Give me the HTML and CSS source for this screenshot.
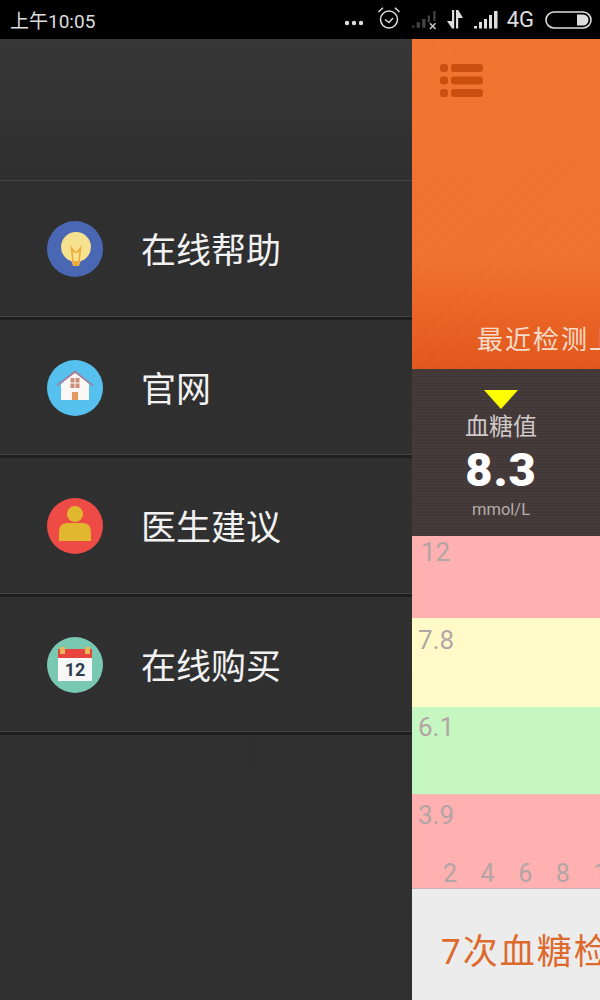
FILE: index.html
```html
<!DOCTYPE html>
<html lang="en">
<head>
  <meta charset="UTF-8">
  <meta name="viewport" content="width=device-width, initial-scale=1.0">
  <title>血糖</title>
  <link rel="stylesheet" href="styles.css">
</head>
<body>

  <div class="status-bar">
    <span class="status-time">上午10:05</span>
    <div class="status-icons">
      <svg class="ic-dots" width="20" height="6" viewBox="0 0 20 6"><circle cx="3" cy="3" r="2.2"/><circle cx="10" cy="3" r="2.2"/><circle cx="17" cy="3" r="2.2"/></svg>
      <svg class="ic-alarm" width="24" height="24" viewBox="0 0 24 24" fill="none" stroke="#ddd" stroke-width="1.5"><circle cx="12" cy="13.5" r="8.5"/><path d="M8 13.5l4 3 4-4.5"/><path d="M1.5 6L6 1.8M22.5 6L18 1.8"/></svg>
      <svg class="ic-sim" width="27" height="20" viewBox="0 0 24 18"><path fill="#444" d="M0 14h2v2H0zM4 11h3v5H4zM9 8h3v8H9zM14 5h2v6h-2zM19 1h2v9h-2z"/><path stroke="#ccc" stroke-width="1.3" fill="none" d="M16 12l5 5M21 12l-5 5"/></svg>
      <svg class="ic-data" width="16" height="19" viewBox="0 0 16 19" fill="#ddd"><path d="M5 0h2.2v18.5H5L0 11h5zM9 0h2.2L16 8h-4.800v10.500H9z"/></svg>
      <svg class="ic-signal" width="24" height="18" viewBox="0 0 24 18" fill="#ddd"><path d="M0 15h3v2.500H0zM5 11h3v6.500H5zM10 8h3v9.500h-3zM15 4h3v13.500h-3zM20 0h3.500v17.500H20z"/></svg>
      <span class="status-net">4G</span>
      <svg class="ic-battery" width="47" height="18" viewBox="0 0 47 18"><rect x="1" y="1" width="45" height="16" rx="8" fill="none" stroke="#ddd" stroke-width="1.6"/><path fill="#ddd" d="M32 3.500h6a5.500 5.500 0 0 1 0 11h-6z"/></svg>
    </div>
  </div>

  <div class="screen">
    <nav class="drawer">
      <div class="drawer-top"></div>

      <a class="menu-row">
        <svg class="menu-icon" viewBox="0 0 56 56">
          <circle cx="28" cy="28" r="28" fill="#4a67b4"/>
          <circle cx="29" cy="26" r="15" fill="#f6e28e"/>
          <path d="M23 32l6 11 6-11v5l-3 7h-6l-3-7z" fill="#f6e28e"/>
          <path d="M25 40h8l-1 5h-6z" fill="#eeaa3a"/>
          <path d="M26 41l-1.500-14 3 4h3l3-4L32 41" fill="none" stroke="#eeaa3a" stroke-width="1.600"/>
        </svg>
        <span>在线帮助</span>
      </a>

      <a class="menu-row">
        <svg class="menu-icon" viewBox="0 0 56 56">
          <circle cx="28" cy="28" r="28" fill="#56c0ee"/>
          <path d="M14 24L28 12l14 12v16H14z" fill="#fbf7f4"/>
          <path d="M9.500 25L28 10.500 46.500 25 45.500 26 28 13 10.500 26z" fill="#a87a95"/>
          <path d="M23.500 18h4v4.500h-4zM28.500 18h4v4.500h-4zM23.500 23.500h4V28h-4zM28.500 23.500h4V28h-4z" fill="#c98f78"/>
          <rect x="25" y="32" width="6" height="8" fill="#e59a62"/>
        </svg>
        <span>官网</span>
      </a>

      <a class="menu-row">
        <svg class="menu-icon" viewBox="0 0 56 56">
          <circle cx="28" cy="28" r="28" fill="#ee4b46"/>
          <circle cx="28" cy="16" r="8" fill="#e0b72e"/>
          <path d="M12 43v-9q0-9 9-9h14q9 0 9 9v9z" fill="#e0b72e"/>
        </svg>
        <span>医生建议</span>
      </a>

      <a class="menu-row">
        <svg class="menu-icon" viewBox="0 0 56 56">
          <circle cx="28" cy="28" r="28" fill="#79c8b1"/>
          <rect x="11" y="20" width="34" height="24" fill="#f7f7f7"/>
          <rect x="11" y="12" width="34" height="9" fill="#e8443f"/>
          <rect x="13" y="10" width="5" height="7" fill="#e9b65a"/>
          <rect x="38" y="10" width="5" height="7" fill="#e9b65a"/>
          <text x="28" y="39" class="cal-num" text-anchor="middle">12</text>
        </svg>
        <span>在线购买</span>
      </a>
    </nav>

    <main class="main">
      <header class="hero">
        <svg class="hero-menu" width="43" height="33" viewBox="0 0 43 33" fill="#c9500f">
          <rect x="0" y="0" width="8" height="8" rx="3"/><rect x="11" y="0" width="32" height="8" rx="3"/>
          <rect x="0" y="12.500" width="8" height="8" rx="3"/><rect x="11" y="12.500" width="32" height="8" rx="3"/>
          <rect x="0" y="25" width="8" height="8" rx="3"/><rect x="11" y="25" width="32" height="8" rx="3"/>
        </svg>
        <div class="hero-text">最近检测上次</div>
      </header>

      <section class="reading">
        <div class="reading-col">
          <div class="reading-arrow"></div>
          <div class="reading-label">血糖值</div>
          <div class="reading-value">8.3</div>
          <div class="reading-unit">mmol/L</div>
        </div>
      </section>

      <section class="chart">
        <div class="band band-high">12</div>
        <div class="band band-warn">7.8</div>
        <div class="band band-ok">6.1</div>
        <div class="band band-low">
          3.9
          <div class="axis"><span>2</span><span>4</span><span>6</span><span>8</span><span>10</span></div>
        </div>
      </section>

      <footer class="summary">7次血糖检测记录</footer>
    </main>
  </div>

</body>
</html>
```

FILE: styles.css
```css
* {
  box-sizing: border-box;
}

body {
  margin: 0;
  width: 600px;
  height: 1000px;
  overflow: hidden;
  font-family: "Roboto", "Noto Sans CJK SC", sans-serif;
  background-color: #000;
}

.status-bar {
  height: 39px;
  display: flex;
  align-items: center;
  justify-content: space-between;
  padding: 0 8px 0 10px;
  background-color: #000;
  color: #ddd;
}

.status-time {
  font-size: 19px;
}

.status-icons {
  display: flex;
  align-items: center;
}

.ic-dots {
  fill: #ddd;
  margin: 6px 0 0 0;
}

.ic-alarm {
  margin: -3px 0 0 13px;
}

.ic-sim {
  margin: 1px 0 0 11px;
}

.ic-data {
  margin: 0 0 0 8px;
}

.ic-signal {
  margin: 0 0 0 11px;
}

.status-net {
  font-size: 22px;
  margin-left: 9px;
}

.ic-battery {
  margin-left: 11px;
}

.screen {
  display: flex;
  height: 961px;
}

.drawer {
  width: 412px;
  flex-shrink: 0;
  background: linear-gradient(#373737, #2f2f30 140px, #303031);
}

.drawer-top {
  height: 142px;
  border-bottom: 1px solid #454545;
}

.menu-row {
  height: 138.5px;
  display: flex;
  align-items: center;
  gap: 38px;
  padding: 0 0 2px 47px;
  border-bottom: 3px solid #1e1e1e;
  box-shadow: inset 0 -1px 0 #454545;
  color: #f2f2f2;
  font-size: 35px;
}

.menu-icon {
  width: 56px;
  height: 56px;
  flex-shrink: 0;
  margin-top: 3px;
}

.cal-num {
  font-size: 18px;
  font-weight: 700;
  fill: #2f3d4c;
}

.main {
  flex: 1;
  min-width: 0;
  overflow: hidden;
  display: flex;
  flex-direction: column;
}

.hero {
  height: 330px;
  display: flex;
  flex-direction: column;
  justify-content: space-between;
  padding: 25px 0 13px 28px;
  background:
    repeating-linear-gradient(135deg, rgba(255, 255, 255, 0.03) 0 1px, transparent 1px 3px),
    linear-gradient(#f1732e, #f1722e 65%, #e2561a);
}

.hero-text {
  padding-left: 37px;
  color: #f6dcca;
  font-size: 26px;
  letter-spacing: 2px;
  white-space: nowrap;
}

.reading {
  height: 167px;
  background:
    repeating-linear-gradient(rgba(255, 255, 255, 0.025) 0 1px, transparent 1px 3px),
    #433838;
}

.reading-col {
  width: 178px;
  display: flex;
  flex-direction: column;
  align-items: center;
  padding-top: 21px;
}

.reading-arrow {
  width: 0;
  height: 0;
  border-left: 17px solid transparent;
  border-right: 17px solid transparent;
  border-top: 19px solid #ffff00;
}

.reading-label {
  margin-top: 3px;
  color: #cfcaca;
  font-size: 24px;
  line-height: 30px;
}

.reading-value {
  margin-top: 1px;
  color: #fff;
  font-size: 47px;
  font-weight: 900;
  line-height: 54px;
  letter-spacing: 1px;
}

.reading-unit {
  margin-top: 3px;
  color: #b3adad;
  font-size: 16.5px;
  line-height: 20px;
}

.chart {
  height: 353px;
  color: #b3a5a5;
  font-size: 26px;
  border-bottom: 1px solid #cbb4b4;
}

.band {
  padding: 1px 0 0 6px;
  line-height: 30px;
}

.band-high {
  height: 82px;
  padding-left: 9px;
  background-color: #ffb0b0;
}

.band-warn {
  height: 89px;
  padding-top: 7px;
  background-color: #fffac8;
}

.band-ok {
  height: 87px;
  padding-top: 5px;
  background-color: #c6f7c0;
}

.band-low {
  height: 94px;
  padding-top: 5px;
  background-color: #ffb0b0;
  border-top: 1px solid #eebcae;
}

.axis {
  display: flex;
  gap: 23.5px;
  margin-top: 30px;
  padding-left: 25px;
  font-size: 25px;
  line-height: 28px;
  white-space: nowrap;
}

.summary {
  flex: 1;
  padding: 34px 0 0 29px;
  background-color: #ececec;
  color: #dd6a2c;
  font-size: 35px;
  letter-spacing: 2px;
  white-space: nowrap;
}
```
